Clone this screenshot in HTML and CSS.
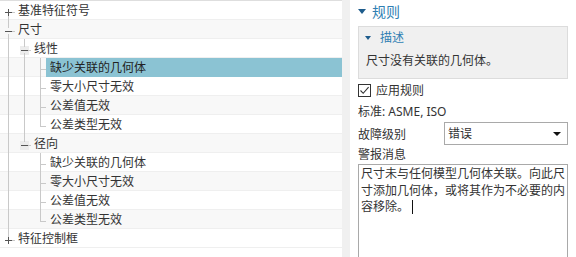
FILE: index.html
```html
<!DOCTYPE html>
<html lang="zh-CN">
<head>
    <meta charset="UTF-8">
    <meta name="viewport" content="width=device-width, initial-scale=1.0">
    <title>规则</title>
    <link rel="stylesheet" href="styles.css">
</head>
<body>
    <div class="page">
        <!-- 左侧规则树 -->
        <div class="tree">
            <div class="row">
                <span class="g exp plus first"></span>
                <span class="label">基准特征符号</span>
            </div>
            <div class="row">
                <span class="g exp minus mid"></span>
                <span class="label">尺寸</span>
            </div>
            <div class="row">
                <span class="g v"></span>
                <span class="g exp minus open"></span>
                <span class="label">线性</span>
            </div>
            <div class="row sel">
                <span class="g v"></span>
                <span class="g v"></span>
                <span class="g t"></span>
                <span class="label">缺少关联的几何体</span>
            </div>
            <div class="row">
                <span class="g v"></span>
                <span class="g v"></span>
                <span class="g t"></span>
                <span class="label">零大小尺寸无效</span>
            </div>
            <div class="row">
                <span class="g v"></span>
                <span class="g v"></span>
                <span class="g t"></span>
                <span class="label">公差值无效</span>
            </div>
            <div class="row">
                <span class="g v"></span>
                <span class="g v"></span>
                <span class="g l"></span>
                <span class="label">公差类型无效</span>
            </div>
            <div class="row">
                <span class="g v"></span>
                <span class="g exp minus last"></span>
                <span class="label">径向</span>
            </div>
            <div class="row">
                <span class="g v"></span>
                <span class="g"></span>
                <span class="g t"></span>
                <span class="label">缺少关联的几何体</span>
            </div>
            <div class="row">
                <span class="g v"></span>
                <span class="g"></span>
                <span class="g t"></span>
                <span class="label">零大小尺寸无效</span>
            </div>
            <div class="row">
                <span class="g v"></span>
                <span class="g"></span>
                <span class="g t"></span>
                <span class="label">公差值无效</span>
            </div>
            <div class="row">
                <span class="g v"></span>
                <span class="g"></span>
                <span class="g l"></span>
                <span class="label">公差类型无效</span>
            </div>
            <div class="row">
                <span class="g exp plus last"></span>
                <span class="label">特征控制框</span>
            </div>
        </div>

        <div class="split"></div>

        <!-- 右侧属性 -->
        <div class="props">
            <div class="sec-head"><span class="tri"></span>规则</div>
            <div class="desc">
                <div class="desc-head"><span class="tri small"></span>描述</div>
                <p class="desc-text">尺寸没有关联的几何体。</p>
            </div>
            <div class="check">
                <span class="box">
                    <svg width="11" height="11" viewBox="0 0 11 11"><path d="M1.5 5.5 L4.2 8.3 L9.6 2.2" fill="none" stroke="#333" stroke-width="1.1"/></svg>
                </span>
                应用规则
            </div>
            <div class="std">标准: ASME, ISO</div>
            <div class="field">
                <span class="field-name">故障级别</span>
                <div class="select">错误<span class="arrow"></span></div>
            </div>
            <div class="lbl">警报消息</div>
            <div class="textarea">尺寸未与任何模型几何体关联。向此尺<br>寸添加几何体，或将其作为不必要的内<br>容移除。<span class="caret"></span></div>
        </div>
    </div>
</body>
</html>
```

FILE: styles.css
```css
body{
    margin: 0;
    overflow: hidden;
    background-color: #fff;
    color: #333;
    font-family: "Noto Sans", "Noto Sans CJK SC", sans-serif;
    font-size: 12px;
}
.page{
    display: flex;
    height: 257px;
}

/* 左侧树 */
.tree{
    width: 346px;
    border-top: 1px solid #dedede;
}
.row{
    display: flex;
    height: 19px;
    line-height: 19px;
    box-shadow: inset 0 -1px #efefef;
}
.row:nth-child(even){
    background-color: #f8f8f8;
}
.label{
    flex: 1;
    padding-left: 2px;
    white-space: nowrap;
}
.sel .label{
    margin-left: -2px;
    padding-left: 4px;
    background-color: #8bc3d3;
    color: #222;
}

/* 树的连线 */
.g{
    width: 16px;
    flex: none;
}
.v{
    background: linear-gradient(#c9c9c9,#c9c9c9) 8px 0 / 1px 100% no-repeat;
}
.t{
    background:
        linear-gradient(#c9c9c9,#c9c9c9) 8px 0 / 1px 100% no-repeat,
        linear-gradient(#c9c9c9,#c9c9c9) 8px 11px / 6px 1px no-repeat;
}
.l{
    background:
        linear-gradient(#c9c9c9,#c9c9c9) 8px 0 / 1px 12px no-repeat,
        linear-gradient(#c9c9c9,#c9c9c9) 8px 11px / 6px 1px no-repeat;
}
/* 展开/折叠按钮 */
.exp{
    --sign: #555;
    --line: #c9c9c9;
}
.plus{
    background:
        linear-gradient(var(--sign),var(--sign)) 5px 11px / 7px 1px no-repeat,
        linear-gradient(var(--sign),var(--sign)) 8px 8px / 1px 7px no-repeat,
        linear-gradient(var(--line),var(--line)) 12px 11px / 3px 1px no-repeat;
}
.minus{
    background:
        linear-gradient(var(--sign),var(--sign)) 5px 11px / 7px 1px no-repeat,
        linear-gradient(var(--line),var(--line)) 12px 11px / 3px 1px no-repeat;
}
.plus.first{
    background:
        linear-gradient(var(--sign),var(--sign)) 5px 11px / 7px 1px no-repeat,
        linear-gradient(var(--sign),var(--sign)) 8px 8px / 1px 7px no-repeat,
        linear-gradient(var(--line),var(--line)) 12px 11px / 3px 1px no-repeat,
        linear-gradient(var(--line),var(--line)) 8px 15px / 1px 4px no-repeat;
}
.minus.mid{
    background:
        linear-gradient(var(--sign),var(--sign)) 5px 11px / 7px 1px no-repeat,
        linear-gradient(var(--line),var(--line)) 12px 11px / 3px 1px no-repeat,
        linear-gradient(var(--line),var(--line)) 8px 0 / 1px 8px no-repeat,
        linear-gradient(var(--line),var(--line)) 8px 14px / 1px 5px no-repeat;
}
.minus.open{
    background:
        linear-gradient(var(--sign),var(--sign)) 5px 11px / 7px 1px no-repeat,
        linear-gradient(var(--line),var(--line)) 12px 11px / 3px 1px no-repeat,
        linear-gradient(var(--line),var(--line)) 8px 0 / 1px 8px no-repeat,
        linear-gradient(var(--line),var(--line)) 8px 14px / 1px 5px no-repeat,
        linear-gradient(#ececec,#ececec) 4px 7px / 9px 9px no-repeat;
}
.minus.last{
    background:
        linear-gradient(var(--sign),var(--sign)) 5px 11px / 7px 1px no-repeat,
        linear-gradient(var(--line),var(--line)) 12px 11px / 3px 1px no-repeat,
        linear-gradient(var(--line),var(--line)) 8px 0 / 1px 8px no-repeat,
        linear-gradient(#ececec,#ececec) 4px 7px / 9px 9px no-repeat;
}
.plus.last{
    background:
        linear-gradient(var(--sign),var(--sign)) 5px 11px / 7px 1px no-repeat,
        linear-gradient(var(--sign),var(--sign)) 8px 8px / 1px 7px no-repeat,
        linear-gradient(var(--line),var(--line)) 12px 11px / 3px 1px no-repeat,
        linear-gradient(var(--line),var(--line)) 8px 0 / 1px 8px no-repeat;
}

.split{
    width: 8px;
    background-color: #f0f0f0;
}

/* 右侧属性面板 */
.props{
    flex: 1;
    padding: 0 8px;
}
.sec-head{
    display: flex;
    align-items: center;
    height: 22px;
    font-size: 14px;
    color: #2f7fb3;
}
.tri{
    width: 0;
    height: 0;
    margin: 1px 6px 0 0;
    border-left: 4.5px solid transparent;
    border-right: 4.5px solid transparent;
    border-top: 5px solid #1e5c8c;
}
.tri.small{
    margin: 1px 9px 0 6px;
    border-left-width: 3.5px;
    border-right-width: 3.5px;
    border-top-width: 4px;
}
.desc{
    margin-top: 4px;
    height: 51px;
    border: 1px solid #dcdcdc;
    background-color: #f0f0f0;
}
.desc-head{
    display: flex;
    align-items: center;
    height: 20px;
    color: #2f7fb3;
}
.desc-text{
    margin: 4px 0 0 7px;
    line-height: 20px;
}
.check{
    display: flex;
    align-items: center;
    height: 20px;
    margin-top: 1px;
}
.box{
    display: flex;
    align-items: center;
    justify-content: center;
    width: 11px;
    height: 11px;
    margin-right: 5px;
    border: 1px solid #333;
    background-color: #fff;
}
.std{
    margin-top: 2px;
    line-height: 20px;
}
.field{
    display: flex;
    align-items: center;
    height: 23px;
}
.field-name{
    width: 86px;
}
.select{
    position: relative;
    flex: 1;
    height: 21px;
    line-height: 21px;
    padding-left: 3px;
    border: 1px solid #a9a9a9;
    background-color: #fff;
}
.arrow{
    position: absolute;
    right: 6px;
    top: 9px;
    border-left: 4px solid transparent;
    border-right: 4px solid transparent;
    border-top: 4px solid #111;
}
.lbl{
    margin-top: 1px;
    line-height: 18px;
}
/* 文本框延伸到底部 */
.textarea{
    height: 91px;
    padding: 1px 2px 0;
    line-height: 16.5px;
    border: 1px solid #a9a9a9;
    border-bottom: none;
    white-space: nowrap;
}
.caret{
    display: inline-block;
    width: 1px;
    height: 14px;
    margin-left: 3px;
    vertical-align: -3px;
    background-color: #111;
}
```
